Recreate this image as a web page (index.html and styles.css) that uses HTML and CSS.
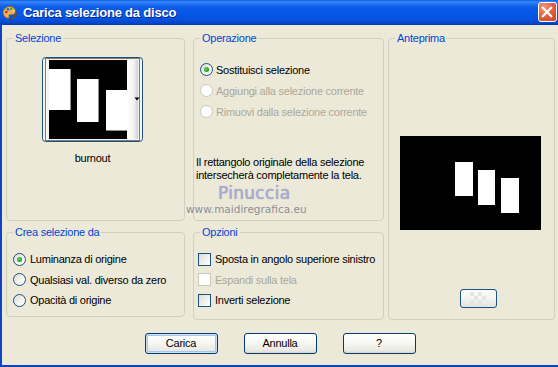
FILE: index.html
```html
<!DOCTYPE html>
<html lang="it">
<head>
<meta charset="utf-8">
<title>Carica selezione da disco</title>
<link rel="stylesheet" href="styles.css">
</head>
<body>
<div class="window">
  <div class="titlebar">
    <svg class="app-icon" width="16" height="16" viewBox="0 0 16 16">
      <path d="M8 1.5C4 1.5 1 4.2 1 7.6c0 3 2.3 5.6 5 5.6 1.3 0 1.4-1 1-1.8-.5-.9.2-1.7 1.2-1.6 2.4.3 5.3-.3 5.3-3.3C13.5 3.6 11 1.5 8 1.5z" fill="#E9B25A" stroke="#8A5A1E" stroke-width="0.8"/>
      <circle cx="4.3" cy="7" r="1.3" fill="#D52B1E"/>
      <circle cx="6" cy="4.2" r="1.2" fill="#2E5BD8"/>
      <circle cx="9.2" cy="3.8" r="1.2" fill="#2FA52F"/>
      <circle cx="11.6" cy="6" r="1.1" fill="#F4E24A"/>
      <path d="M15 8.5L9.5 14.5" stroke="#7A4A1A" stroke-width="1.6" stroke-linecap="round"/>
      <path d="M9.8 14.2l-1.6 1.3.5-2z" fill="#333"/>
    </svg>
    <span class="title">Carica selezione da disco</span>
    <span class="close">
      <svg width="19" height="20" viewBox="0 0 19 20"><path d="M5 5.5l9 9M14 5.5l-9 9" stroke="#fff" stroke-width="2.2" stroke-linecap="square"/></svg>
    </span>
  </div>
  <div class="client">
    <div class="groups">
      <fieldset class="group g-sel">
        <legend>Selezione</legend>
        <div class="thumb-col">
          <div class="thumb-btn">
            <svg width="101" height="85" viewBox="0 0 101 85">
              <defs>
                <linearGradient id="strip" x1="0" x2="1" y1="0" y2="0">
                  <stop offset="0" stop-color="#ffffff"/>
                  <stop offset="0.6" stop-color="#f4f4f4"/>
                  <stop offset="1" stop-color="#cfcfcf"/>
                </linearGradient>
              </defs>
              <rect x="0.5" y="0.5" width="100" height="84" rx="3" fill="#F6F5F0" stroke="#1C5180"/>
              <rect x="7" y="3" width="78" height="79" fill="#000"/>
              <rect x="85" y="3" width="11" height="79" fill="url(#strip)"/>
              <rect x="7" y="12" width="22" height="41" fill="#fff"/>
              <rect x="28" y="12" width="1" height="41" fill="#8a8a8a"/>
              <rect x="35" y="22" width="22" height="43" fill="#fff"/>
              <rect x="56" y="22" width="1" height="43" fill="#8a8a8a"/>
              <rect x="64" y="33" width="21" height="41" fill="#fff"/>
              <rect x="64" y="73" width="21" height="1" fill="#8a8a8a"/>
              <rect x="3.5" y="1.5" width="94" height="82" fill="none" stroke="#000" stroke-dasharray="1 1"/>
              <path d="M92.5 40.5h5l-2.5 3z" fill="#000"/>
            </svg>
          </div>
          <div class="thumb-caption">burnout</div>
        </div>
      </fieldset>

      <fieldset class="group g-op">
        <legend>Operazione</legend>
        <div class="opt-list rows21">
          <div class="opt"><span class="radio checked"></span><span>Sostituisci selezione</span></div>
          <div class="opt disabled"><span class="radio"></span><span>Aggiungi alla selezione corrente</span></div>
          <div class="opt disabled"><span class="radio"></span><span>Rimuovi dalla selezione corrente</span></div>
        </div>
        <p class="info">Il rettangolo originale della selezione<br>intersecherà completamente la tela.</p>
      </fieldset>

      <fieldset class="group g-prev">
        <legend>Anteprima</legend>
        <svg class="preview" width="141" height="94" viewBox="0 0 141 94">
          <rect width="141" height="94" fill="#000"/>
          <rect x="55" y="26" width="18" height="34" fill="#fff"/>
          <rect x="78" y="34" width="17" height="35" fill="#fff"/>
          <rect x="101" y="42" width="18" height="35" fill="#fff"/>
        </svg>
        <div class="mini-btn">
          <svg width="17" height="13" viewBox="0 0 17 13">
            <rect x="0" y="0" width="4" height="4" fill="#e4e4e4"/>
            <rect x="8" y="0" width="4" height="4" fill="#e4e4e4"/>
            <rect x="4" y="4" width="4" height="4" fill="#e4e4e4"/>
            <rect x="12" y="4" width="4" height="4" fill="#e4e4e4"/>
            <rect x="0" y="8" width="4" height="4" fill="#e4e4e4"/>
            <rect x="8" y="8" width="4" height="4" fill="#e4e4e4"/>
          </svg>
        </div>
      </fieldset>

      <fieldset class="group g-crea">
        <legend>Crea selezione da</legend>
        <div class="opt-list rows20">
          <div class="opt"><span class="radio checked"></span><span>Luminanza di origine</span></div>
          <div class="opt"><span class="radio"></span><span>Qualsiasi val. diverso da zero</span></div>
          <div class="opt"><span class="radio"></span><span>Opacità di origine</span></div>
        </div>
      </fieldset>

      <fieldset class="group g-opz">
        <legend>Opzioni</legend>
        <div class="opt-list rows20">
          <div class="opt"><span class="check"></span><span>Sposta in angolo superiore sinistro</span></div>
          <div class="opt disabled"><span class="check"></span><span>Espandi sulla tela</span></div>
          <div class="opt"><span class="check"></span><span>Inverti selezione</span></div>
        </div>
      </fieldset>
    </div>

    <div class="buttons">
      <div class="btn default">Carica</div>
      <div class="btn">Annulla</div>
      <div class="btn">?</div>
    </div>
  </div>

  <div class="watermark">
    <div class="wm-name">Pinuccia</div>
    <div class="wm-url">www.maidiregrafica.eu</div>
  </div>
</div>
</body>
</html>
```

FILE: styles.css
```css
* { box-sizing: border-box; }

html, body {
  margin: 0;
  padding: 0;
}

body {
  width: 558px;
  height: 367px;
  overflow: hidden;
  background: #ECE9D8;
  font-family: "Liberation Sans", Arial, sans-serif;
  font-size: 11px;
  letter-spacing: -0.25px;
  color: #000;
}

.window {
  position: relative;
  width: 558px;
  height: 367px;
  display: flex;
  flex-direction: column;
}

/* ---------- title bar ---------- */
.titlebar {
  height: 25px;
  flex: none;
  display: flex;
  align-items: center;
  padding-left: 2px;
  background: linear-gradient(to bottom,
    #0A5FE6 0px, #3A8AF9 2px, #1F6FF2 4px, #0A5BE8 8px,
    #0558E4 13px, #0553E0 19px, #0549D4 22px, #003CB4 25px);
}

.app-icon {
  flex: none;
  margin-right: 5px;
}

.title {
  flex: 1;
  color: #fff;
  font-weight: bold;
  font-size: 13px;
  letter-spacing: -0.2px;
  line-height: 25px;
  text-shadow: 1px 1px 0 #0A2A8C;
}

.close {
  flex: none;
  align-self: flex-start;
  margin-top: 2px;
  margin-right: 1px;
  width: 19px;
  height: 20px;
  border: 1px solid #fff;
  border-radius: 3px;
  background: radial-gradient(circle at 30% 25%, #F09A7E 0%, #E2643F 45%, #C8431C 100%);
  display: flex;
}

.close svg {
  margin: -1px 0 0 -1px;
}

/* ---------- client ---------- */
.client {
  flex: 1;
  border-left: 2px solid #0B44C6;
  border-bottom: 2px solid #0B44C6;
  display: flex;
  flex-direction: column;
}

.groups {
  display: grid;
  grid-template-columns: 187px 195px 167px;
  grid-template-rows: 190px 95px;
  row-gap: 4px;
  padding: 6px 0 0 4px;
}

.group {
  margin: 0;
  padding: 0;
  min-width: 0;
  border: 1px solid #D0D0BF;
  border-radius: 4px;
}

.group legend {
  padding: 0 2px;
  margin-left: 6px;
  color: #0046D5;
  line-height: 14px;
}

.g-sel { grid-column: 1; grid-row: 1; width: 179px; height: 190px; }
.g-op  { grid-column: 2; grid-row: 1; width: 191px; height: 190px; }
.g-prev { grid-column: 3; grid-row: 1 / 3; width: 167px; height: 289px; }
.g-crea { grid-column: 1; grid-row: 2; width: 179px; height: 92px; }
.g-opz  { grid-column: 2; grid-row: 2; width: 191px; height: 95px; }

/* selezione */
.thumb-col {
  width: 101px;
  margin: 12px 0 0 35px;
  display: flex;
  flex-direction: column;
  align-items: center;
}

.thumb-btn {
  width: 101px;
  height: 85px;
}

.thumb-btn svg { display: block; }

.thumb-caption {
  margin-top: 10px;
  line-height: 13px;
}

/* option rows */
.opt-list {
  display: flex;
  flex-direction: column;
}

.rows21 { padding: 14px 0 0 6px; }
.rows21 .opt { height: 21px; }

.rows20 { padding: 10px 0 0 6px; }
.rows20 .opt { height: 20.5px; }

.g-opz .rows20 { padding-left: 4px; }

.opt {
  display: flex;
  align-items: center;
  gap: 3px;
  white-space: nowrap;
}

.g-crea .opt { gap: 4px; }
.g-opz .opt { gap: 4px; }

.opt.disabled { color: #ACA899; }

.radio {
  flex: none;
  width: 13px;
  height: 13px;
  border-radius: 50%;
  border: 1px solid #1C5180;
  background: linear-gradient(135deg, #DCDBD5 0%, #F3F3EF 55%, #FFFFFF 100%);
  display: flex;
  align-items: center;
  justify-content: center;
}

.radio.checked::after {
  content: "";
  width: 5px;
  height: 5px;
  border-radius: 50%;
  background: radial-gradient(circle at 40% 40%, #5EDC5A 0%, #27A827 55%, #1B861B 100%);
}

.opt.disabled .radio {
  border-color: #CAC8BB;
  background: #FFFFFF;
}

.check {
  flex: none;
  width: 13px;
  height: 13px;
  border: 1px solid #1C5180;
  background: linear-gradient(135deg, #DCDCD7 0%, #F2F2EE 60%, #FFFFFF 100%);
}

.opt.disabled .check {
  border-color: #CAC8BB;
  background: #FFFFFF;
}

.info {
  margin: 34px 0 0 2px;
  line-height: 12.5px;
}

/* anteprima */
.preview {
  display: block;
  margin: 91px 0 0 11px;
}

.mini-btn {
  margin: 59px 0 0 71px;
  width: 37px;
  height: 19px;
  border: 1px solid #1C5180;
  border-radius: 3px;
  background: linear-gradient(#FFFFFF, #F1F1EC 60%, #E4E3DC);
  display: flex;
  align-items: center;
  justify-content: center;
}

.mini-btn svg { display: block; opacity: 0.9; }

/* buttons */
.buttons {
  display: flex;
  justify-content: center;
  gap: 26px;
  margin-top: 13px;
}

.btn {
  width: 73px;
  height: 21px;
  border: 1px solid #003C74;
  border-radius: 3px;
  background: linear-gradient(#FFFFFF 0%, #F6F6F2 50%, #E8E7E0 90%, #D6D0C5 100%);
  display: flex;
  align-items: center;
  justify-content: center;
  line-height: 13px;
}

.btn.default {
  box-shadow: inset 0 0 0 1px #CEE0FA, inset 0 0 0 2px #A8C4F2;
}

/* watermark */
.watermark {
  position: absolute;
  left: 186px;
  top: 185px;
  width: 125px;
  pointer-events: none;
}

.wm-name {
  margin-left: 32px;
  font-family: "DejaVu Sans", sans-serif;
  font-size: 17px;
  line-height: 17px;
  letter-spacing: 0.3px;
  color: #ABABD0;
  text-shadow: 0 0 1px #9090BC;
}

.wm-url {
  margin-top: 2px;
  font-family: "DejaVu Sans", sans-serif;
  font-size: 10.5px;
  line-height: 11px;
  letter-spacing: 0;
  color: #8E8E9C;
}
```
